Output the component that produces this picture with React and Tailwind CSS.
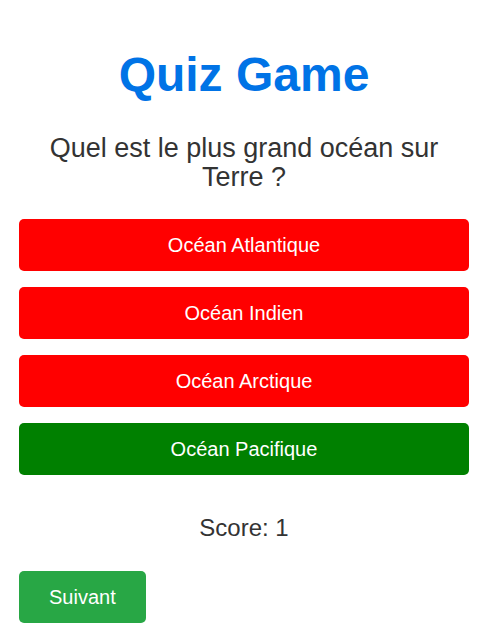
import React from "react";

const answers = [
  { label: "Océan Atlantique", ok: false },
  { label: "Océan Indien", ok: false },
  { label: "Océan Arctique", ok: false },
  { label: "Océan Pacifique", ok: true },
];

const App = () => {
  return (
    <div className="min-h-screen bg-white font-['Liberation_Sans',Arial,sans-serif]">
      <div className="w-[450px] ml-[19px] pt-[47px]">
        <h1 className="text-[48px] font-bold text-[#0073e6] text-center leading-[55px]">
          Quiz Game
        </h1>
        <h2 className="mt-[32px] text-[27px] leading-[29px] text-[#333] text-center">
          Quel est le plus grand océan sur Terre ?
        </h2>

        <div className="mt-[27px] flex flex-col gap-4">
          {answers.map((a) => (
            <button
              key={a.label}
              className={
                "h-[52px] w-full rounded-[5px] text-white text-[20px] " +
                (a.ok ? "bg-[#008000]" : "bg-[#ff0000]")
              }
            >
              {a.label}
            </button>
          ))}
        </div>

        <p className="mt-[39px] text-[24px] leading-[28px] text-[#333] text-center">
          Score: 1
        </p>

        <button className="mt-[29px] h-[52px] px-[30px] rounded-[5px] bg-[#28a745] text-white text-[20px]">
          Suivant
        </button>
      </div>
    </div>
  );
};

export default App;
